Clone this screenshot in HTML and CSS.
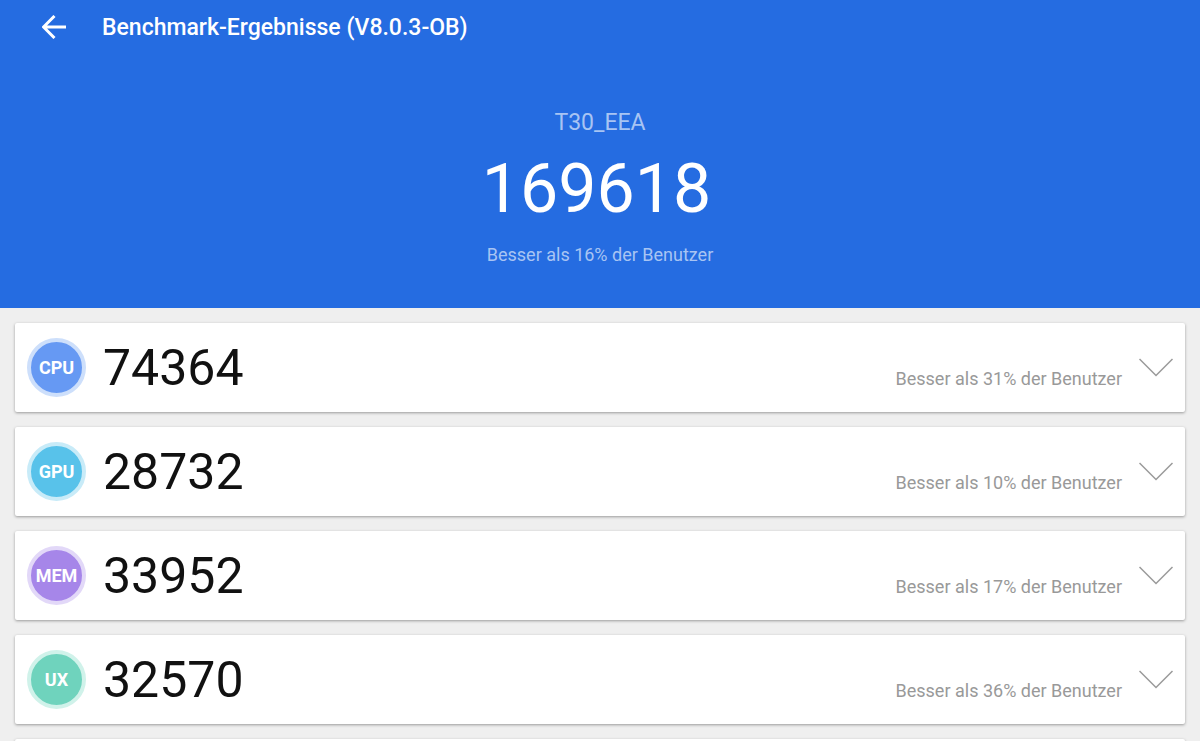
FILE: index.html
```html
<!DOCTYPE html>
<html lang="de">
<head>
<meta charset="utf-8">
<meta name="viewport" content="width=device-width, initial-scale=1">
<title>Benchmark-Ergebnisse</title>
<link rel="stylesheet" href="styles.css">
</head>
<body>
<header class="hero">
  <div class="toolbar">
    <button class="back" type="button" aria-label="Zurück">
      <svg viewBox="0 0 24 24" width="24" height="24"><path d="M24 12H2M12.500 1L1.500 12l11 11" fill="none" stroke="currentColor" stroke-width="3"/></svg>
    </button>
    <h1 class="title">Benchmark-Ergebnisse (V8.0.3-OB)</h1>
  </div>
  <div class="summary">
    <p class="device">T30_EEA</p>
    <p class="total">169618</p>
    <p class="rank">Besser als 16% der Benutzer</p>
  </div>
</header>
<main class="results">
  <section class="card">
    <span class="badge cpu">CPU</span><span class="score">74364</span>
    <span class="compare">Besser als 31% der Benutzer</span>
    <button class="expand" type="button" aria-label="CPU-Details"><svg viewBox="0 0 34 20" width="34" height="20"><path d="M.5 1L17 17.500 33.500 1"/></svg></button>
  </section>
  <section class="card">
    <span class="badge gpu">GPU</span><span class="score">28732</span>
    <span class="compare">Besser als 10% der Benutzer</span>
    <button class="expand" type="button" aria-label="GPU-Details"><svg viewBox="0 0 34 20" width="34" height="20"><path d="M.5 1L17 17.500 33.500 1"/></svg></button>
  </section>
  <section class="card">
    <span class="badge mem">MEM</span><span class="score">33952</span>
    <span class="compare">Besser als 17% der Benutzer</span>
    <button class="expand" type="button" aria-label="MEM-Details"><svg viewBox="0 0 34 20" width="34" height="20"><path d="M.5 1L17 17.500 33.500 1"/></svg></button>
  </section>
  <section class="card">
    <span class="badge ux">UX</span><span class="score">32570</span>
    <span class="compare">Besser als 36% der Benutzer</span>
    <button class="expand" type="button" aria-label="UX-Details"><svg viewBox="0 0 34 20" width="34" height="20"><path d="M.5 1L17 17.500 33.500 1"/></svg></button>
  </section>
  <section class="card" aria-hidden="true"></section>
</main>
</body>
</html>
```
FILE: styles.css
```css
* { box-sizing: border-box; }
html, body { height: 100%; }
body {
  margin: 0;
  display: flex;
  flex-direction: column;
  background: #efefef;
  font-family: Roboto, "Liberation Sans", sans-serif;
}
button { padding: 0; border: 0; background: none; color: inherit; }
svg { display: block; }
.hero { flex: none; padding-bottom: 39px; background: #256ce1; color: #fff; }
.toolbar { display: flex; align-items: center; gap: 36px; height: 54px; padding: 0 42px; }
.title { margin: 0; padding-top: 2px; font-size: 23px; line-height: 28px; font-weight: 500; }
.summary { display: flex; flex-direction: column; align-items: center; padding-top: 55px; }
.summary p { margin: 0; }
.device { font-size: 23px; line-height: 28px; color: #a8c4f3; }
.summary .total { font-size: 68px; line-height: 80px; padding: 12px 7px 12px 0; }
.rank { font-size: 18px; line-height: 28px; color: #a8c4f3; }
.results {
  flex: 1;
  min-height: 0;
  display: flex;
  flex-direction: column;
  gap: 15px;
  padding: 15px;
  overflow-y: auto;
  scrollbar-width: none;
}
.card {
  display: flex;
  flex: none;
  align-items: center;
  min-height: 89px;
  padding: 0 12px;
  border-radius: 2px;
  background: #fff;
  box-shadow: 0 1px 3px rgba(0, 0, 0, 0.36);
}
.badge {
  display: flex;
  align-items: center;
  justify-content: center;
  flex: none;
  width: 59px;
  height: 59px;
  border: 4px solid;
  border-radius: 50%;
  color: #fff;
  font-size: 18px;
  font-weight: 700;
}
.cpu { background: #6699f3; border-color: #cddffb; }
.gpu { background: #58c2ea; border-color: #c8ebf8; }
.mem { background: #a686e9; border-color: #e2d8f8; }
.ux { background: #6fd3bd; border-color: #d0f2ea; }
.score { margin-left: 17px; font-size: 50px; line-height: 60px; color: #111; }
.compare { margin-left: auto; padding-top: 22px; font-size: 18px; line-height: 24px; color: #999; }
.expand { margin-left: 17px; color: #999; }
.expand path { fill: none; stroke: currentColor; stroke-width: 1.5; }
```
